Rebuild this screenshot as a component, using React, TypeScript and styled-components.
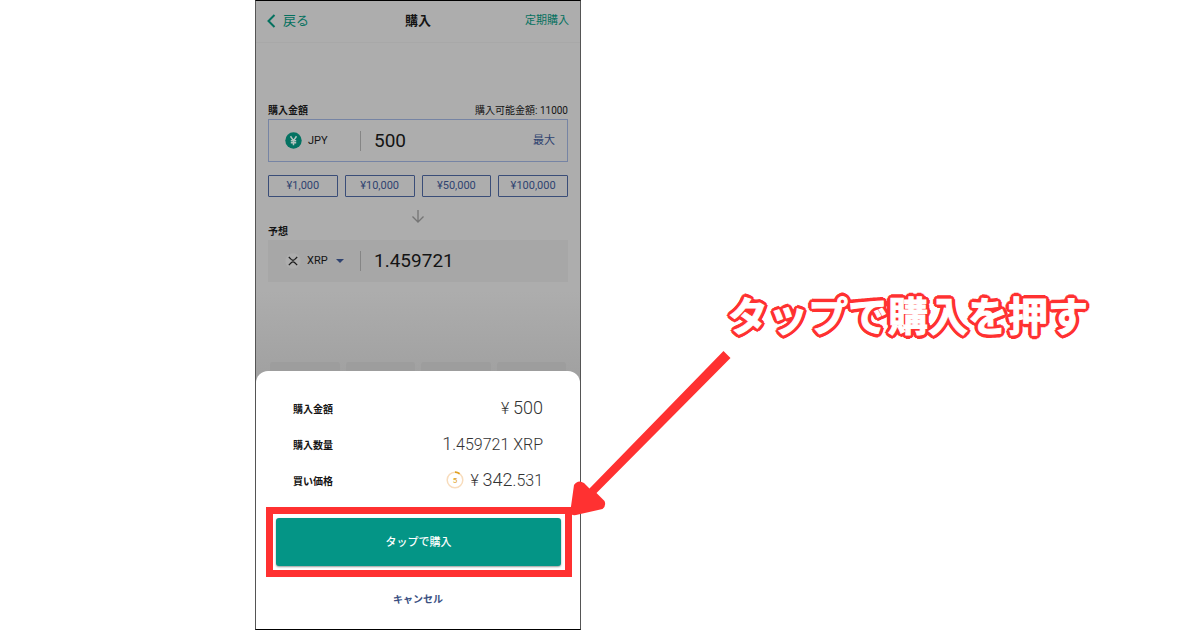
import React, { useState } from "react";
import styled, { createGlobalStyle } from "styled-components";

const teal = "#04715f";
const navy = "#2f4370";
const red = "#ff3131";

const GlobalStyle = createGlobalStyle`
  *, *::before, *::after { box-sizing: border-box; }
  body {
    margin: 0;
    background: #fff;
    color: #141414;
    font-family: Roboto, "Noto Sans CJK JP", sans-serif;
  }
  button, input, select { font: inherit; color: inherit; margin: 0; }
  h1, dl, dd { margin: 0; }
`;

const Page = styled.main`
  display: grid;
  grid-template-columns: minmax(0, 255fr) minmax(0, 326fr) minmax(0, 619fr);
  min-height: 100vh;
`;

const Phone = styled.section`
  grid-column: 2;
  display: flex;
  flex-direction: column;
  border: 1px solid #000;
  border-left-color: #555;
  border-right-color: #555;
  background: linear-gradient(#adadad, #adadad 290px, #a0a0a0 380px);
`;

const TopBar = styled.header`
  display: grid;
  grid-template-columns: 1fr auto 1fr;
  align-items: center;
  height: 42px;
  padding: 0 11px 2px 11px;
  border-bottom: 1px solid #a8a8a8;
`;

const BackButton = styled.button`
  display: flex;
  align-items: center;
  gap: 6px;
  justify-self: start;
  padding: 0;
  border: 0;
  background: none;
  color: ${teal};
  font-size: 13px;
  line-height: 20px;
`;

const Title = styled.h1`
  font-size: 13px;
  line-height: 20px;
  font-weight: 700;
`;

const RecurringLink = styled.a`
  justify-self: end;
  color: ${teal};
  font-size: 11px;
  line-height: 20px;
  text-decoration: none;
`;

const Form = styled.form`
  flex: 1;
  display: flex;
  flex-direction: column;
  padding: 60px 12px 0;
`;

const LabelRow = styled.div`
  display: flex;
  justify-content: space-between;
  font-size: 10px;
  line-height: 16px;
`;

const FieldLabel = styled.label`
  font-weight: 700;
`;

const Field = styled.div<{ $filled?: boolean }>`
  display: flex;
  align-items: center;
  height: ${(p) => (p.$filled ? 42 : 43)}px;
  padding: 0 12px 0 16px;
  border: 1px solid ${(p) => (p.$filled ? "transparent" : "#7684a4")};
  background: ${(p) => (p.$filled ? "#a7a7a7" : "none")};
`;

const Currency = styled.div`
  display: flex;
  align-items: center;
  gap: 6px;
  width: 76px;
  height: 20px;
  border-right: 1px solid #858585;
  font-size: 11px;
`;

const CurrencySelect = styled.select`
  appearance: none;
  width: 23px;
  padding: 0;
  border: 0;
  background: none;
  font-size: 11px;
  line-height: 16px;
`;

const AmountInput = styled.input`
  flex: 1;
  min-width: 0;
  padding: 0 0 0 13px;
  border: 0;
  outline: 0;
  background: none;
  font-size: 19px;
  line-height: 24px;
`;

const MaxButton = styled.button`
  padding: 0;
  border: 0;
  background: none;
  color: ${navy};
  font-size: 11px;
  line-height: 16px;
`;

const Presets = styled.div`
  display: grid;
  grid-template-columns: repeat(4, 1fr);
  gap: 7px;
  margin-top: 13px;
`;

const Preset = styled.button`
  height: 22px;
  padding: 0;
  border: 1px solid #3a4d78;
  border-radius: 1px;
  background: none;
  color: ${navy};
  font-size: 11px;
  line-height: 20px;
`;

const DownArrow = styled.svg`
  align-self: center;
  margin: 13px 0 1px;
`;

const EstimateLabel = styled(FieldLabel)`
  font-size: 10px;
  line-height: 16px;
`;

const Keypad = styled.div`
  display: grid;
  grid-template-columns: repeat(4, 1fr);
  gap: 6px;
  margin-top: auto;
  padding: 0 2px;
`;

const KeyTop = styled.span`
  height: 9px;
  border-radius: 3px 3px 0 0;
  background: #9d9d9d;
`;

const Sheet = styled.section`
  display: flex;
  flex-direction: column;
  padding: 20px 0 19px;
  border-radius: 12px 12px 0 0;
  background: #fff;
`;

const Summary = styled.dl`
  padding: 0 37px;
`;

const SummaryRow = styled.div`
  display: flex;
  align-items: center;
  justify-content: space-between;
  height: 36px;
`;

const Term = styled.dt`
  padding-top: 1px;
  font-size: 10px;
  line-height: 16px;
  font-weight: 700;
`;

const Value = styled.dd`
  display: flex;
  align-items: center;
  gap: 6px;
  padding-bottom: 2px;
  color: #333;
  font-size: 16px;
  line-height: 24px;
  font-weight: 300;
`;

const Large = styled.span`
  font-size: 18px;
`;

const Highlight = styled.div`
  position: relative;
  margin: 8px 8px 0 10px;
  padding: 4px 4px 4px 3px;
  border: 7px solid ${red};
`;

const BuyButton = styled.button`
  display: block;
  width: 100%;
  height: 48px;
  padding: 0 0 2px;
  border: 0;
  border-radius: 3px;
  background: #049586;
  box-shadow: 0 1px 2px rgba(0, 0, 0, 0.4);
  color: #fff;
  font-size: 11px;
  font-weight: 500;
`;

const Pointer = styled.svg`
  position: absolute;
  left: 100%;
  bottom: 48px;
  pointer-events: none;
`;

const CancelButton = styled.button`
  align-self: center;
  margin-top: 13px;
  padding: 0;
  border: 0;
  background: none;
  color: #3a5082;
  font-size: 10px;
  line-height: 20px;
  font-weight: 700;
`;

const Caption = styled.p`
  margin: 284px 0 0 147px;
  color: #fff;
  font-family: "Noto Sans CJK JP", sans-serif;
  font-size: 40px;
  line-height: 60px;
  font-weight: 700;
  white-space: nowrap;
  -webkit-text-stroke: 1px #fff;
  text-shadow:
    3px 0 ${red}, 3px 1px ${red}, 3px 2px ${red}, 2px 3px ${red}, 1px 3px ${red},
    0 3px ${red}, -1px 3px ${red}, -2px 3px ${red}, -3px 2px ${red}, -3px 1px ${red},
    -3px 0 ${red}, -3px -1px ${red}, -3px -2px ${red}, -2px -3px ${red}, -1px -3px ${red},
    0 -3px ${red}, 1px -3px ${red}, 2px -3px ${red}, 3px -2px ${red}, 3px -1px ${red},
    4px 0 ${red}, -4px 0 ${red}, 0 4px ${red}, 0 -4px ${red};
`;

const presets = [1000, 10000, 50000, 100000];

export default function App() {
  const [amount, setAmount] = useState("500");

  return (
    <>
      <GlobalStyle />
      <Page>
        <Phone>
          <TopBar>
            <BackButton type="button">
              <svg width="10" height="14" viewBox="0 0 10 14" fill="none" stroke={teal} strokeWidth="2" aria-hidden="true">
                <path d="M7.5 1 1.5 7l6 6" />
              </svg>
              戻る
            </BackButton>
            <Title>購入</Title>
            <RecurringLink href="#recurring">定期購入</RecurringLink>
          </TopBar>

          <Form>
            <LabelRow>
              <FieldLabel htmlFor="amount">購入金額</FieldLabel>
              <span>購入可能金額: 11000</span>
            </LabelRow>
            <Field>
              <Currency>
                <svg width="17" height="17" viewBox="0 0 17 17" aria-hidden="true">
                  <circle cx="8.5" cy="8.5" r="8.2" fill="#047262" />
                  <path d="M5.5 4.3 8.5 8.6l3-4.3M8.5 8.6v4.6M5.8 8.8h5.4M5.8 10.8h5.4" fill="none" stroke="#b4c4c0" strokeWidth="1.5" />
                </svg>
                JPY
              </Currency>
              <AmountInput id="amount" inputMode="numeric" value={amount} onChange={(e) => setAmount(e.target.value)} />
              <MaxButton type="button" onClick={() => setAmount("11000")}>最大</MaxButton>
            </Field>
            <Presets>
              {presets.map((n) => (
                <Preset key={n} type="button" onClick={() => setAmount(String(n))}>
                  ¥{n.toLocaleString("en-US")}
                </Preset>
              ))}
            </Presets>
            <DownArrow width="14" height="13" viewBox="0 0 14 13" fill="none" stroke="#757575" strokeWidth="1.3" aria-hidden="true">
              <path d="M7 0v12M1.5 6.5 7 12l5.5-5.5" />
            </DownArrow>
            <EstimateLabel htmlFor="estimate">予想</EstimateLabel>
            <Field $filled>
              <Currency>
                <svg width="16" height="16" viewBox="0 0 16 16" aria-hidden="true">
                  <circle cx="8" cy="8" r="7.7" fill="#aeaeae" />
                  <path d="M3.8 4l2.4 2.4q1.8 1.7 3.6 0L12.2 4M3.8 12.2l2.4-2.4q1.8-1.7 3.6 0l2.4 2.4" fill="none" stroke="#1c1c1c" strokeWidth="1.2" />
                </svg>
                <CurrencySelect aria-label="通貨" defaultValue="XRP">
                  <option>XRP</option>
                </CurrencySelect>
                <svg width="8" height="4" viewBox="0 0 8 4" aria-hidden="true">
                  <path d="M0 0h8L4 4z" fill={navy} />
                </svg>
              </Currency>
              <AmountInput id="estimate" readOnly value="1.459721" />
            </Field>
            <Keypad aria-hidden="true">
              <KeyTop />
              <KeyTop />
              <KeyTop />
              <KeyTop />
            </Keypad>
          </Form>

          <Sheet>
            <Summary>
              <SummaryRow>
                <Term>購入金額</Term>
                <Value>
                  <span>¥ <Large>500</Large></span>
                </Value>
              </SummaryRow>
              <SummaryRow>
                <Term>購入数量</Term>
                <Value>
                  <span><Large>1</Large>.459721 XRP</span>
                </Value>
              </SummaryRow>
              <SummaryRow>
                <Term>買い価格</Term>
                <Value>
                  <svg width="18" height="18" viewBox="0 0 18 18" fill="none" aria-hidden="true">
                    <circle cx="9" cy="9" r="7.8" stroke="#f8dcbc" strokeWidth="1.5" />
                    <path d="M9 1.2a7.8 7.8 0 0 1 4.6 1.5" stroke="#e0a020" strokeWidth="1.7" />
                    <text x="9" y="12" textAnchor="middle" fontSize="8" fontWeight="400" fill="#e0a020">5</text>
                  </svg>
                  <span>¥ <Large>342</Large>.531</span>
                </Value>
              </SummaryRow>
            </Summary>
            <Highlight>
              <BuyButton type="button">タップで購入</BuyButton>
              <Pointer width="170" height="174" viewBox="0 0 170 174" fill={red} aria-hidden="true">
                <path d="M158.500 3l7 7L31.500 145l8 8q2 5-2 8L11 167Q5 168 5.500 162L9 137q4-6 10-2l5.500 5.500z" />
              </Pointer>
            </Highlight>
            <CancelButton type="button">キャンセル</CancelButton>
          </Sheet>
        </Phone>
        <Caption>タップで購入を押す</Caption>
      </Page>
    </>
  );
}
